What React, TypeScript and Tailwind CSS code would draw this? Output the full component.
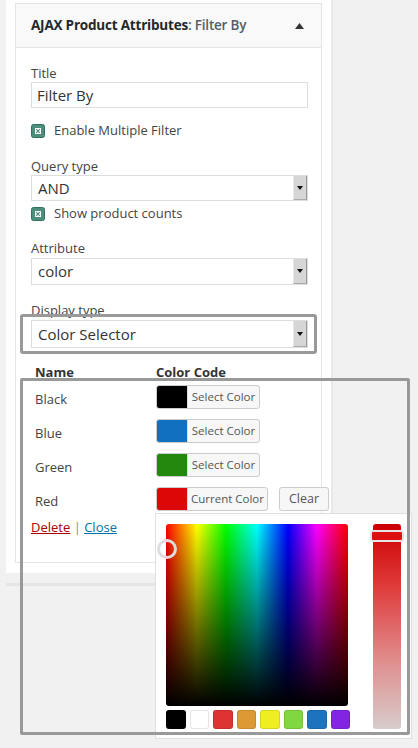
import React from "react";

const font = "font-['Open_Sans','Noto_Sans',sans-serif]";

function Check({ label }: { label: string }) {
  return (
    <div className="flex items-center h-[18px] gap-[9px]">
      <svg width="14" height="14" viewBox="0 0 14 14">
        <rect x="0.5" y="0.5" width="13" height="13" rx="2" fill="#4b8f7c" stroke="#33705f" />
        <rect x="4" y="4" width="6" height="6" fill="#fff" />
        <path d="M5.2 5.2 L8.8 8.8 M8.8 5.2 L5.2 8.8" stroke="#4b8f7c" strokeWidth="1.2" />
      </svg>
      <span className="text-[13px] text-[#444]">{label}</span>
    </div>
  );
}

function Select({ value, h = "h-[27px]" }: { value: string; h?: string }) {
  return (
    <div className={`flex ${h} w-[277px] border border-[#ddd] bg-white`}>
      <div className="flex-1 flex items-center pl-[6px] text-[15px] text-[#333]">{value}</div>
      <div className="w-[14px] bg-[#d6d6d6] border-l border-[#e8e8e8] border-r border-r-[#999] border-b border-b-[#aaa] flex items-center justify-center">
        <svg width="6" height="4" viewBox="0 0 6 4">
          <polygon points="0,0 6,0 3,4" fill="#111" />
        </svg>
      </div>
    </div>
  );
}

function Label({ text }: { text: string }) {
  return <div className="text-[13px] text-[#444] leading-[18px]">{text}</div>;
}

function ColorButton({ color, text, w }: { color: string; text: string; w: string }) {
  return (
    <div className={`flex shrink-0 h-[24px] ${w} border border-[#ccc] rounded-[3px] bg-[#f7f7f7] overflow-hidden`}>
      <div className="w-[30px] h-full shrink-0" style={{ background: color }} />
      <div className="flex-1 flex items-center justify-center whitespace-nowrap text-[11.5px] text-[#555] border-l border-[#ddd]">
        {text}
      </div>
    </div>
  );
}

const rows = [
  { name: "Black", color: "#000000", text: "Select Color" },
  { name: "Blue", color: "#1170c0", text: "Select Color" },
  { name: "Green", color: "#22880e", text: "Select Color" },
  { name: "Red", color: "#dd0707", text: "Current Color" },
];

const swatches = ["#000000", "#ffffff", "#dd3333", "#dd9933", "#eeee22", "#81d742", "#1e73be", "#8224e3"];

export default function App() {
  return (
    <div className={`relative w-[418px] h-[748px] overflow-hidden bg-[#f1f1f1] ${font}`}>
      <div className="ml-[6px] w-[327px] bg-white border-r-2 border-[#e8e8e8] pt-[3px] px-[9px] pb-[10px]">
        <div className="border border-[#e5e5e5]">
          <div className="h-[44px] bg-[#f9f9f9] border-b border-[#e5e5e5] flex items-center justify-between pl-[15px] pr-[17px]">
            <div className="text-[13.5px] font-bold text-[#23282d] tracking-[-0.2px]">
              AJAX Product Attributes<span className="text-[#555d66] font-semibold">: Filter By</span>
            </div>
            <svg width="9" height="6" viewBox="0 0 9 6">
              <polygon points="4.5,0 9,6 0,6" fill="#333" />
            </svg>
          </div>
          <div className="pl-[15px] pt-[16px] pb-[26px]">
            <Label text="Title" />
            <div className="h-[26px] w-[277px] border border-[#ddd] flex items-center pl-[5px] text-[15px] text-[#333]">
              Filter By
            </div>
            <div className="mt-[14px]">
              <Check label="Enable Multiple Filter" />
            </div>
            <div className="mt-[17px]">
              <Label text="Query type" />
            </div>
            <Select value="AND" h="h-[26px]" />
            <div className="mt-[4px]">
              <Check label="Show product counts" />
            </div>
            <div className="mt-[16px]">
              <Label text="Attribute" />
            </div>
            <div className="mt-[1px]">
              <Select value="color" />
            </div>
            <div className="mt-[16px]">
              <Label text="Display type" />
            </div>
            <div className="mt-[1px]">
              <Select value="Color Selector" h="h-[28px]" />
            </div>
            <div className="mt-[15px] flex text-[13px] font-bold text-[#333] leading-[18px]">
              <div className="w-[125px] shrink-0 pl-[4px]">Name</div>
              <div>Color Code</div>
            </div>
            <div className="mt-[4px] flex flex-col gap-[10px]">
              {rows.map((r) => (
                <div key={r.name} className="flex items-center h-[24px]">
                  <div className="w-[125px] shrink-0 pl-[4px] pt-[6px] text-[13px] text-[#444]">{r.name}</div>
                  <ColorButton color={r.color} text={r.text} w={r.name === "Red" ? "w-[112px]" : "w-[104px]"} />
                  {r.name === "Red" && (
                    <div className="ml-[11px] shrink-0 h-[24px] w-[50px] border border-[#ccc] rounded-[3px] bg-[#f7f7f7] flex items-center justify-center text-[12.5px] text-[#555]">
                      Clear
                    </div>
                  )}
                </div>
              ))}
            </div>
            <div className="mt-[7px] text-[13px] leading-[18px]">
              <span className="text-[#a00] underline">Delete</span>
              <span className="text-[#888]"> | </span>
              <span className="text-[#0073aa] underline">Close</span>
            </div>
          </div>
        </div>
      </div>
      <div className="ml-[6px] mt-[10px] w-[327px] h-[3px] bg-[#e5e5e5]" />

      {/* colour picker popup */}
      <div className="absolute left-[155px] top-[513px] w-[257px] h-[226px] bg-white border border-[#dfdfdf] flex pl-[10px] pt-[10px] gap-[23px]">
        <div className="flex flex-col gap-[4px]">
          <div
            className="relative w-[182px] h-[182px] rounded-[3px]"
            style={{
              background:
                "linear-gradient(to bottom, rgba(0,0,0,0) 0%, #000 100%), linear-gradient(to right, #f00, #ff0 17%, #0f0 33%, #0ff 50%, #00f 67%, #f0f 83%, #f00)",
            }}
          >
            <div className="absolute left-[-9px] top-[15px] w-[20px] h-[20px] rounded-full border-[3px] border-[#ddd] bg-transparent" />
          </div>
          <div className="flex gap-[4px]">
            {swatches.map((c) => (
              <div
                key={c}
                className="w-[19.5px] h-[19px] rounded-[3px] border border-black/10"
                style={{ background: c }}
              />
            ))}
          </div>
        </div>
        <div className="relative w-[28px] h-[205px] rounded-[3px] bg-[linear-gradient(to_bottom,#cc0000,#e03a3a_30%,#e08a8a_65%,#d8cccc)]">
          <div className="absolute left-[-3px] top-[6px] w-[34px] h-[12px] rounded-[3px] border-2 border-[#e5e5e5] bg-[#dd1111]" />
        </div>
      </div>

      {/* highlight boxes */}
      <div className="absolute left-[20px] top-[314px] w-[297px] h-[40px] border-[3px] border-[#999] rounded-[3px]" />
      <div className="absolute left-[20px] top-[378px] w-[390px] h-[357px] border-[3px] border-[#999] rounded-[2px]" />
    </div>
  );
}
